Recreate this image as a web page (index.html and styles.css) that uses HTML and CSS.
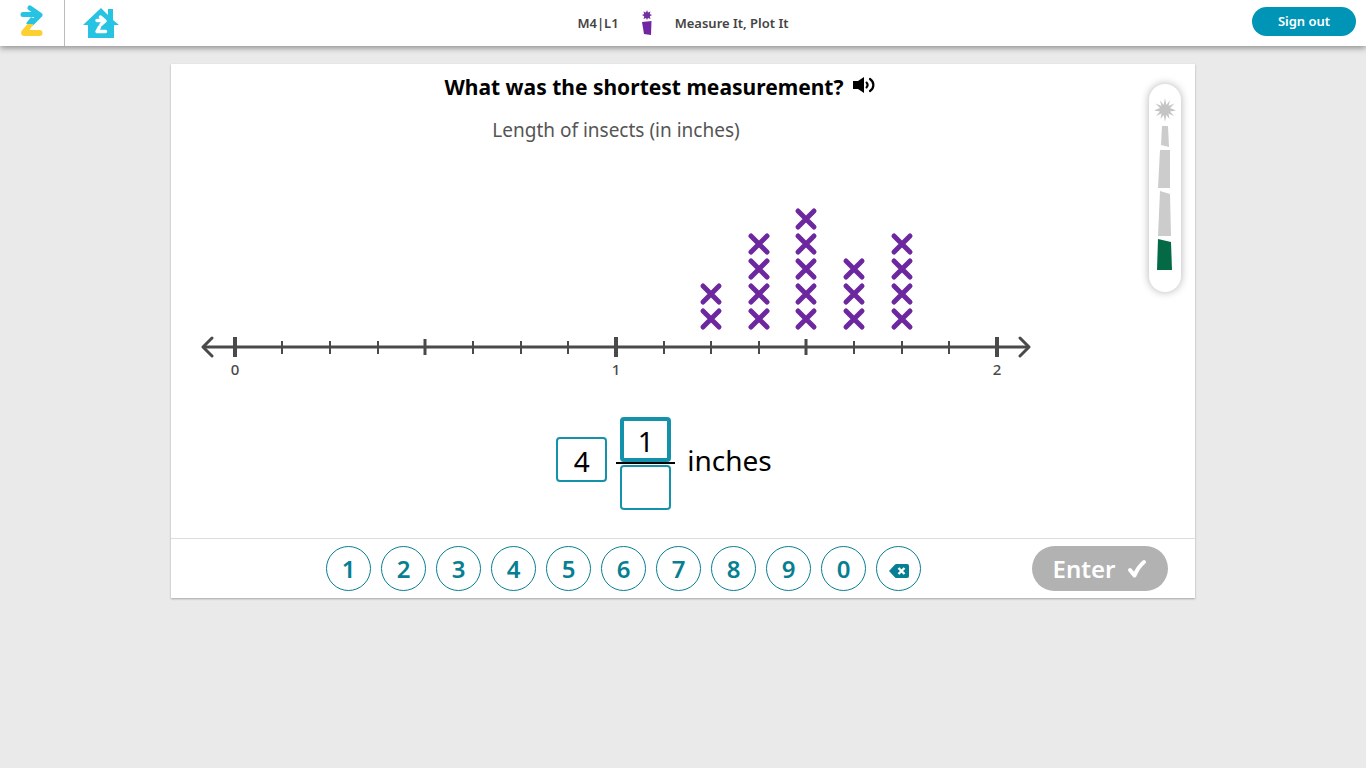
FILE: index.html
```html
<!DOCTYPE html>
<html lang="en">

<head>
    <meta charset="UTF-8">
    <meta name="viewport" content="width=device-width, initial-scale=1.0">
    <title>Measure It, Plot It</title>
    <link rel="stylesheet" href="styles.css">
</head>

<body>
    <header class="topbar">
        <nav class="topbar-nav">
            <a class="logo-link" href="#" aria-label="Start">
                <svg width="24" height="34" viewBox="0 0 24 34">
                    <path d="M3 10.500H19M10 4L20 11L12 19" fill="none" stroke="#27c3e3" stroke-width="5" stroke-linecap="round" stroke-linejoin="round" />
                    <path d="M15 15L12 21.500L6 19.500L11 13Z" fill="#27c3e3" />
                    <path d="M7.500 20H13.500L9.500 26H19.500a2.800 2.800 0 0 1 0 6H4.500C1.500 32 0.500 29.500 1.500 27Z" fill="#fbd030" />
                </svg>
            </a>
            <a class="home-link" href="#" aria-label="Home">
                <svg width="38" height="32" viewBox="0 0 38 32">
                    <path d="M19 1L26 8V2H31V13L37 18H32V31H6V18H1Z" fill="#27c3e3" />
                    <path d="M15 13.500H22.500M18.500 10L23 14L19 17.500" fill="none" stroke="#fff" stroke-width="3.500" stroke-linecap="round" stroke-linejoin="round" />
                    <path d="M17.500 20L15 24.500H23.500" fill="none" stroke="#fff" stroke-width="3.500" stroke-linecap="round" stroke-linejoin="round" />
                </svg>
            </a>
        </nav>
        <div class="lesson">
            <span>M4|L1</span>
            <svg width="12" height="26" viewBox="0 0 12 26">
                <path d="M6 0L7 2.500L9.500 1.500L8.800 4L11 5L8.800 6.300L9.500 9L7 8L6 10L5 8L2.500 9L3.200 6.300L1 5L3.200 4L2.500 1.500L5 2.500Z" fill="#7030a0" />
                <path d="M1 12L10.500 11L10 25L3 24Z" fill="#7026a3" />
            </svg>
            <span>Measure It, Plot It</span>
        </div>
        <button class="sign-out" type="button">Sign out</button>
    </header>

    <main class="card">
        <div class="workspace">
            <section class="problem">
                <h1 class="question">
                    What was the shortest measurement?
                    <button class="speak" type="button" aria-label="Read aloud">
                        <svg width="22" height="18" viewBox="0 0 22 18">
                            <path d="M0 5H5L11 1V17L5 13H0Z" fill="#000" />
                            <path d="M13.500 6.500Q15.800 9 13.500 11.500" fill="none" stroke="#000" stroke-width="2" stroke-linecap="round" />
                            <path d="M17 3C21.500 6 21.500 12 17 15" fill="none" stroke="#000" stroke-width="2.200" stroke-linecap="round" />
                        </svg>
                    </button>
                </h1>

                <figure class="plot">
                    <figcaption>Length of insects (in inches)</figcaption>
                    <svg class="line-plot" viewBox="0 0 830 180">
                        <defs>
                            <path id="mark" d="M-8 -8L8 8M8 -8L-8 8" />
                        </defs>
                        <!-- axis -->
                        <g class="axis">
                            <path d="M2 147H828" stroke-width="3" />
                            <path d="M11 138L2 147L11 156M819 138L828 147L819 156" stroke-width="3" stroke-linecap="round" stroke-linejoin="round" />
                            <path d="M34 137V157M415 137V157M796 137V157" stroke-width="4" />
                            <path d="M224 139V155M605 139V155" stroke-width="3" />
                            <path d="M81 141V154M129 141V154M177 141V154M272 141V154M320 141V154M367 141V154M463 141V154M510 141V154M558 141V154M653 141V154M701 141V154M748 141V154" stroke-width="2" />
                        </g>
                        <g class="axis-labels">
                            <text x="34" y="175">0</text>
                            <text x="415" y="175">1</text>
                            <text x="796" y="175">2</text>
                        </g>
                        <!-- data -->
                        <g class="marks">
                            <use href="#mark" x="510" y="119" />
                            <use href="#mark" x="510" y="94" />
                            <use href="#mark" x="558" y="119" />
                            <use href="#mark" x="558" y="94" />
                            <use href="#mark" x="558" y="69" />
                            <use href="#mark" x="558" y="44" />
                            <use href="#mark" x="605" y="119" />
                            <use href="#mark" x="605" y="94" />
                            <use href="#mark" x="605" y="69" />
                            <use href="#mark" x="605" y="44" />
                            <use href="#mark" x="605" y="19" />
                            <use href="#mark" x="653" y="119" />
                            <use href="#mark" x="653" y="94" />
                            <use href="#mark" x="653" y="69" />
                            <use href="#mark" x="701" y="119" />
                            <use href="#mark" x="701" y="94" />
                            <use href="#mark" x="701" y="69" />
                            <use href="#mark" x="701" y="44" />
                        </g>
                    </svg>
                </figure>

                <form class="answer" id="answer">
                    <input class="box whole" type="text" value="4" aria-label="Whole number">
                    <div class="fraction">
                        <input class="box active" type="text" value="1" aria-label="Numerator">
                        <div class="bar"></div>
                        <input class="box" type="text" aria-label="Denominator">
                    </div>
                    <span class="unit">inches</span>
                </form>
            </section>

            <aside class="progress">
                <svg width="32" height="208" viewBox="0 0 32 208">
                    <path d="M16 14L17.300 21L21 16.500L19.500 22L25.500 19.500L21 24L27 26.500L21 27.500L25 32L19.500 29.500L20.500 35L17.300 31L16 38L14.700 31L11.500 35L12.500 29.500L7 32L11 27.500L5 26.500L11 24L6.500 19.500L12.500 22L11 16.500L14.700 21Z" fill="#c4c4c4" />
                    <path d="M13 42H19L20 63L12 61Z" fill="#ccc" />
                    <path d="M11 66H21V104H9Z" fill="#ccc" />
                    <path d="M11 107L21 110L22 152H9Z" fill="#ccc" />
                    <path d="M9 155L22 158L23 186H8Z" fill="#046a46" />
                </svg>
            </aside>
        </div>

        <footer class="controls">
            <div class="keypad">
                <button class="key" type="button">1</button>
                <button class="key" type="button">2</button>
                <button class="key" type="button">3</button>
                <button class="key" type="button">4</button>
                <button class="key" type="button">5</button>
                <button class="key" type="button">6</button>
                <button class="key" type="button">7</button>
                <button class="key" type="button">8</button>
                <button class="key" type="button">9</button>
                <button class="key" type="button">0</button>
                <button class="key" type="button" aria-label="Delete">
                    <svg width="20" height="18" viewBox="0 0 20 18">
                        <path d="M0 11L6 4.500Q6.500 4 7.500 4H18Q20 4 20 6V16Q20 18 18 18H7.500Q6.500 18 6 17.500Z" fill="#077f92" />
                        <path d="M9.500 8L15.500 14M15.500 8L9.500 14" stroke="#fff" stroke-width="2.400" />
                    </svg>
                </button>
            </div>
            <button class="enter" type="submit" form="answer">
                Enter
                <svg width="20" height="20" viewBox="0 0 20 20">
                    <path d="M3 11L7.500 16.500Q11 8 17 3" fill="none" stroke="#fff" stroke-width="4" stroke-linecap="round" stroke-linejoin="round" />
                </svg>
            </button>
        </footer>
    </main>
</body>

</html>
```
FILE: styles.css
```css
* {
    box-sizing: border-box;
}

body {
    margin: 0;
    background-color: #eaeaea;
    font-family: "Noto Sans", "Open Sans", sans-serif;
    color: #000;
}

button,
input {
    font-family: inherit;
}

button {
    cursor: pointer;
}

svg {
    display: block;
}

/* top bar */
.topbar {
    display: grid;
    grid-template-columns: 1fr auto 1fr;
    align-items: center;
    height: 46px;
    background-color: #fff;
    box-shadow: 0 2px 6px rgba(0, 0, 0, 0.4);
}

.topbar-nav {
    display: flex;
    height: 100%;
}

.logo-link {
    display: flex;
    align-items: center;
    justify-content: center;
    width: 65px;
    padding-bottom: 4px;
    border-right: 1px solid #bbb;
}

.home-link {
    display: flex;
    align-items: center;
    padding-left: 17px;
}

.lesson {
    display: flex;
    align-items: center;
    gap: 22px;
    font-size: 13px;
    font-weight: 600;
    color: #444;
}

.sign-out {
    justify-self: end;
    width: 104px;
    height: 29px;
    margin: 0 10px 4px 0;
    padding: 0;
    border: none;
    border-radius: 15px;
    background-color: #0095b6;
    color: #fff;
    font-size: 13px;
    font-weight: 600;
}

/* activity card */
.card {
    max-width: 1024px;
    margin: 18px auto;
    background-color: #fff;
    box-shadow: 0 1px 2px rgba(0, 0, 0, 0.3);
}

.workspace {
    display: grid;
    grid-template-columns: 1fr 46px;
    align-items: start;
    padding-bottom: 28px;
}

.question {
    display: flex;
    align-items: center;
    justify-content: center;
    gap: 10px;
    margin: 0;
    padding-top: 8px;
    font-size: 21px;
    line-height: 30px;
    font-weight: 700;
}

.speak {
    padding: 0 0 4px;
    border: none;
    background: none;
}

.plot {
    margin: 14px 118px 0 30px;
}

.plot figcaption {
    margin-bottom: 56px;
    font-size: 19px;
    line-height: 28px;
    text-align: center;
    color: #555;
}

.line-plot {
    width: 100%;
}

.axis {
    fill: none;
    stroke: #4a4a4a;
}

.axis-labels {
    fill: #4a4a4a;
    font-size: 15px;
    font-weight: 500;
    text-anchor: middle;
}

.marks {
    stroke: #6d28a0;
    stroke-width: 5;
    stroke-linecap: round;
}

.answer {
    display: flex;
    align-items: center;
    justify-content: center;
    margin-top: 37px;
    padding-left: 8px;
}

.box {
    display: block;
    width: 51px;
    height: 45px;
    padding: 2px 0 0;
    border: 2px solid #1592ab;
    border-radius: 4px;
    background-color: #fff;
    font-size: 28px;
    text-align: center;
    outline: none;
}

.box.active,
.box:focus {
    border-width: 4px;
}

.whole {
    margin-bottom: 8px;
}

.fraction {
    display: flex;
    flex-direction: column;
    align-items: center;
    margin: 0 12px 0 9px;
}

.bar {
    width: 59px;
    height: 2px;
    margin-bottom: 1px;
    background-color: #000;
}

.unit {
    margin-bottom: 8px;
    font-size: 28px;
    line-height: 40px;
}

/* progress tower */
.progress {
    width: 32px;
    margin-top: 20px;
    border-radius: 16px;
    background-color: #fff;
    box-shadow: 0 0 8px rgba(0, 0, 0, 0.3);
}

/* keypad and enter */
.controls {
    display: flex;
    justify-content: space-between;
    padding: 7px 27px 7px 155px;
    border-top: 1px solid #ddd;
}

.keypad {
    display: flex;
    gap: 10px;
}

.key {
    display: flex;
    align-items: center;
    justify-content: center;
    width: 45px;
    height: 45px;
    padding: 0;
    border: 1px solid #077f92;
    border-radius: 50%;
    background-color: #fff;
    color: #077f92;
    font-size: 24px;
    font-weight: 600;
}

.enter {
    display: flex;
    align-items: center;
    justify-content: center;
    gap: 12px;
    width: 136px;
    height: 45px;
    padding: 0;
    border: none;
    border-radius: 23px;
    background-color: #b2b2b2;
    color: #fff;
    font-size: 24px;
    font-weight: 600;
}
```
